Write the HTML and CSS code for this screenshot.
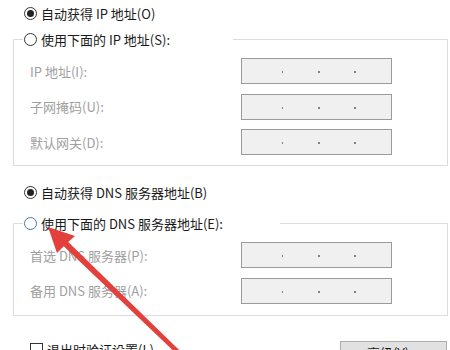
FILE: index.html
```html
<!DOCTYPE html>
<html lang="zh-CN">
<head>
  <meta charset="UTF-8">
  <title>Internet 协议版本 4 (TCP/IPv4) 属性</title>
  <link rel="stylesheet" href="styles.css">
</head>
<body>
  <div class="dialog">
    <div class="option"><span class="radio checked"></span>自动获得 IP 地址(O)</div>

    <fieldset class="group">
      <legend class="option legend"><span class="radio"></span>使用下面的 IP 地址(S):</legend>
      <div class="field">
        <span class="field-label">IP 地址(I):</span>
        <span class="ip-box"><i></i><b></b><i></i><b></b><i></i><b></b><i></i></span>
      </div>
      <div class="field">
        <span class="field-label">子网掩码(U):</span>
        <span class="ip-box"><i></i><b></b><i></i><b></b><i></i><b></b><i></i></span>
      </div>
      <div class="field">
        <span class="field-label">默认网关(D):</span>
        <span class="ip-box"><i></i><b></b><i></i><b></b><i></i><b></b><i></i></span>
      </div>
    </fieldset>

    <div class="option dns-auto"><span class="radio checked"></span>自动获得 DNS 服务器地址(B)</div>

    <fieldset class="group dns-group">
      <legend class="option legend"><span class="radio focused"></span>使用下面的 DNS 服务器地址(E):</legend>
      <div class="field">
        <span class="field-label">首选 DNS 服务器(P):</span>
        <span class="ip-box"><i></i><b></b><i></i><b></b><i></i><b></b><i></i></span>
      </div>
      <div class="field">
        <span class="field-label">备用 DNS 服务器(A):</span>
        <span class="ip-box"><i></i><b></b><i></i><b></b><i></i><b></b><i></i></span>
      </div>
    </fieldset>

    <div class="footer">
      <div class="check-row"><span class="checkbox"></span>退出时验证设置(L)</div>
      <button class="btn">高级(V)...</button>
    </div>

    <!-- red annotation arrow pointing at the DNS radio -->
    <svg class="arrow" width="450" height="350" viewBox="0 0 450 350">
      <polygon fill="#e3403b" points="48,227 75,236 68.2,242 181.6,352.4 178.4,355.6 63.8,246.3 57,253"/>
    </svg>
  </div>
</body>
</html>
```

FILE: styles.css
```css
body {
  margin: 0;
  background: #fff;
  font-family: "Noto Sans CJK SC", "Noto Sans", sans-serif;
  font-size: 13px;
  color: #1a1a1a;
}

.dialog {
  position: relative;
  width: 450px;
  height: 350px;
  overflow: hidden;
}

.option {
  display: flex;
  align-items: center;
  gap: 4px;
  height: 26px;
  padding-left: 24px;
  white-space: nowrap;
}

.radio {
  width: 11px;
  height: 11px;
  border: 1px solid #333;
  border-radius: 50%;
  background: #fff;
  display: flex;
  align-items: center;
  justify-content: center;
  flex-shrink: 0;
}

.radio.checked::after {
  content: "";
  width: 7px;
  height: 7px;
  border-radius: 50%;
  background: #222;
}

.radio.focused {
  border-color: #3d7cb0;
}

.group {
  margin: 0 2px 0 13px;
  padding: 6px 0 10px 16px;
  border: 1px solid #dcdcdc;
  min-width: 0;
}

.legend {
  box-sizing: border-box;
  width: 210px;
  margin-left: -7px;
  padding: 0 0 0 1px;
  background: #fff;
}

.field {
  display: grid;
  grid-template-columns: 211px 151px;
  align-items: center;
  height: 26px;
  color: #a0a0a0;
}

.field + .field {
  margin-top: 9.5px;
}

.ip-box {
  display: flex;
  align-items: center;
  height: 26px;
  box-sizing: border-box;
  padding: 2px 0 0 5px;
  border: 1px solid #9a9a9a;
  background: #f0f0f0;
}

.ip-box i {
  width: 35px;
}

.ip-box b {
  width: 2px;
  height: 2px;
  background: #808080;
}

.dns-auto {
  margin-top: 13px;
}

.dns-group {
  margin-top: 5px;
  padding-bottom: 11px;
}

.dns-group .legend {
  width: 257px;
}

.footer {
  display: flex;
  align-items: flex-start;
  margin-top: 25px;
  padding-left: 30px;
}

.check-row {
  display: flex;
  align-items: flex-start;
  gap: 4px;
  line-height: 18px;
  white-space: nowrap;
}

.checkbox {
  width: 11px;
  height: 11px;
  margin-top: 2px;
  border: 1px solid #333;
  background: #fff;
}

.btn {
  margin: 0 3px 0 auto;
  width: 107px;
  height: 24px;
  padding: 0;
  border: 1px solid #adadad;
  background: #e1e1e1;
  font: inherit;
  color: #1a1a1a;
}

.arrow {
  position: absolute;
  top: 0;
  left: 0;
  pointer-events: none;
}
```
